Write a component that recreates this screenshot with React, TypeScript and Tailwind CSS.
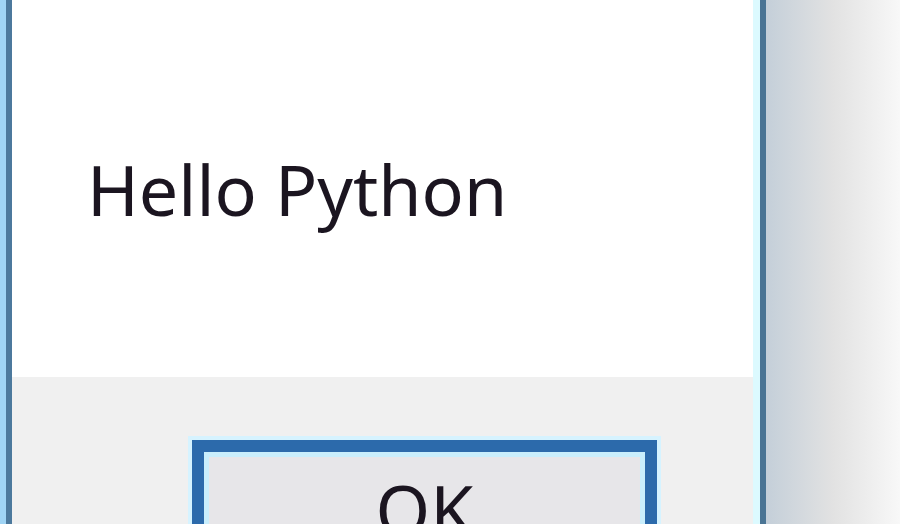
export default function App() {
  return (
    <div className="flex w-[900px] h-[524px] overflow-hidden bg-white font-['Noto_Sans',sans-serif]">
      {/* left window frame */}
      <div className="w-[6px] shrink-0 bg-[#9fd4f5]" />
      <div className="w-[6px] shrink-0 bg-[#4c799d]" />

      {/* dialog body */}
      <div className="flex flex-col w-[741px] shrink-0">
        <div className="h-[377px] shrink-0 bg-white pl-[75px] pt-[154px]">
          <p className="text-[70px] leading-none text-[#1b1520]">Hello Python</p>
        </div>
        <div className="flex-1 min-h-0 overflow-hidden bg-[#f0f0f0] pl-[180px] pt-[63px]">
          <div className="w-[465px] h-[120px] border-[12px] border-[#2c6aab] shadow-[0_0_0_4px_#d6f3ff]">
            <div className="h-full border-[5px] border-[#c9eefc] bg-[#e7e6e9] pt-[17px] text-center">
              <span className="text-[70px] leading-none text-[#1b1520]">OK</span>
            </div>
          </div>
        </div>
      </div>

      {/* right window frame and shadow */}
      <div className="w-[7px] shrink-0 bg-[#dcfaff]" />
      <div className="w-[6px] shrink-0 bg-[#4a7494]" />
      <div className="flex-1 bg-gradient-to-r from-[#c4cfd9] via-[#e2e2e2] to-[#f8f8f8]" />
    </div>
  )
}
